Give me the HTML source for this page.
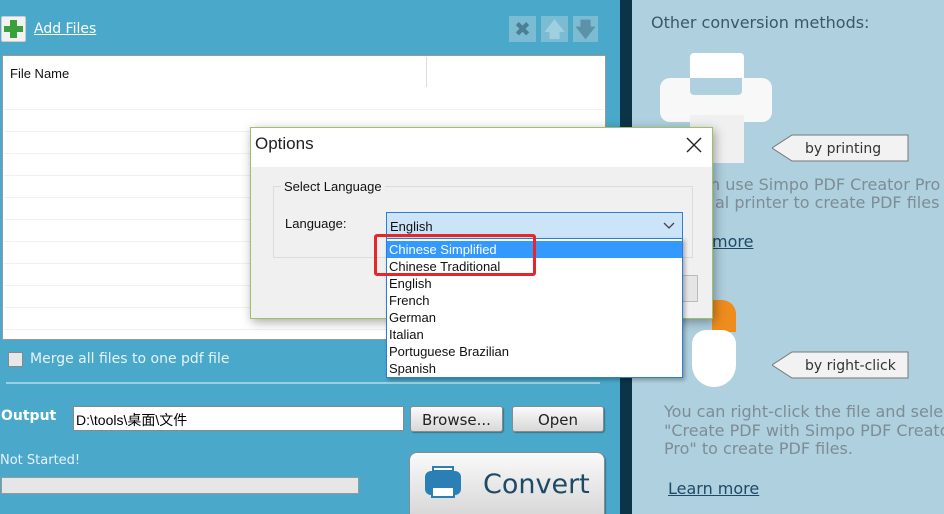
<!DOCTYPE html>
<html style="overflow:hidden"><head><meta charset="utf-8"><style>
*{margin:0;padding:0;box-sizing:border-box}
html,body{width:944px;height:514px;overflow:hidden}
body{position:relative;background:#4aa9cb;font-family:"DejaVu Sans","Liberation Sans","Noto Sans CJK SC",sans-serif}
.a{position:absolute}
.t{font-size:14px;white-space:nowrap}
.btn{background:linear-gradient(#fafafa,#d8d8d8);border:1px solid #8a8a8a;border-radius:3px;text-align:center;color:#222;box-shadow:1px 1px 1px rgba(0,0,0,.3)}
.rt{color:#7d8d96;font-size:16px;line-height:18.5px;white-space:nowrap}
</style></head><body>
<div class="a" style="left:1px;top:16px;width:25px;height:26px;background:#f2f2f2;border-radius:2px;border:1px solid #ccc"></div>
<div class="a" style="left:10px;top:20px;width:7px;height:18px;background:#3aa13a"></div>
<div class="a" style="left:4px;top:26px;width:19px;height:6px;background:#3aa13a"></div>
<div class="a t" style="left:34px;top:21px;color:#fff;text-decoration:underline;font-size:14px">Add Files</div>
<div class="a" style="left:509px;top:16px;width:27px;height:26px;background:#7cbcd3;color:#4b7f95;font-size:20px;text-align:center;line-height:26px;font-weight:bold">✖</div>
<div class="a" style="left:541px;top:16px;width:27px;height:26px;background:#7cbcd3;color:#9fd0e0;font-size:20px;text-align:center;line-height:26px;font-weight:bold">🡅</div>
<div class="a" style="left:573px;top:16px;width:25px;height:26px;background:#7cbcd3;color:#5b92a8;font-size:20px;text-align:center;line-height:26px;font-weight:bold">🡇</div>
<div class="a" style="left:2px;top:55px;width:604px;height:285px;background:#fff;border:1px solid #999"></div>
<div class="a" style="left:426px;top:57px;width:1px;height:30px;background:#ddd"></div>
<div class="a" style="left:10px;top:66px;font-size:13px;font-family:'Liberation Sans',sans-serif;color:#111">File Name</div>
<div class="a" style="left:4px;top:109px;width:600px;height:230px;background:repeating-linear-gradient(#f0f0f0 0 1px,transparent 1px 22px)"></div>
<div class="a" style="left:8px;top:352px;width:15px;height:15px;background:#e8e8e8;border:1px solid #888"></div>
<div class="a t" style="left:30px;top:351px;color:#e6f3f8">Merge all files to one pdf file</div>
<div class="a" style="left:6px;top:382px;width:594px;height:2px;background:#9ccfe0"></div>
<div class="a t" style="left:1px;top:408px;color:#fff;font-weight:bold">Output</div>
<div class="a" style="left:73px;top:406px;width:331px;height:25px;background:#fff;border:1px solid #888;font-size:14px;padding:3px 2px;font-family:'Liberation Sans','Noto Sans CJK SC',sans-serif">D:\tools\桌面\文件</div>
<div class="a btn t" style="left:410px;top:406px;width:93px;height:26px;line-height:26px;font-size:15px">Browse...</div>
<div class="a btn t" style="left:512px;top:406px;width:92px;height:26px;line-height:26px;font-size:15px">Open</div>
<div class="a" style="left:0;top:453px;font-size:13px;color:#e6f3f8">Not Started!</div>
<div class="a" style="left:1px;top:477px;width:358px;height:17px;background:#e6e6e6;border:1px solid #999"></div>
<div class="a btn" style="left:409px;top:452px;width:196px;height:62px;border-radius:8px 8px 0 0;border-bottom:none"></div>
<div class="a" style="left:425px;top:471px;width:36px;height:24px;background:#2a7fb5;border-radius:6px"></div>
<div class="a" style="left:432px;top:466px;width:22px;height:6px;background:#fff;border:2px solid #2a7fb5"></div>
<div class="a" style="left:431px;top:486px;width:24px;height:12px;background:#fff;border:2px solid #2a7fb5"></div>
<div class="a" style="left:483px;top:469px;font-size:27px;color:#1e4a66">Convert</div>
<div class="a" style="left:620px;top:0;width:12px;height:514px;background:#0b3448"></div>
<div class="a" style="left:632px;top:0;width:312px;height:514px;background:#afd0df"></div>
<div class="a" style="left:651px;top:13px;font-size:16px;color:#3a5868">Other conversion methods:</div>
<div class="a" style="left:690px;top:53px;width:54px;height:42px;background:#fff;border-radius:4px"></div>
<div class="a" style="left:660px;top:78px;width:112px;height:44px;background:#f8f8f8;border-radius:10px"></div>
<div class="a" style="left:690px;top:78px;width:52px;height:17px;background:#afd0df;border-radius:0 0 4px 4px"></div>
<div class="a" style="left:690px;top:115px;width:54px;height:48px;background:#f0f0f0"></div>
<svg class="a" style="left:772px;top:134px" width="138" height="30"><polygon points="0,14 20,1 136,1 136,27 20,27" fill="#f2f2f2" stroke="#777"/><text x="33" y="19" font-size="14" fill="#333" font-family="DejaVu Sans">by printing</text></svg>
<div class="a rt" style="left:710px;top:176px">n use Simpo PDF Creator Pro</div>
<div class="a rt" style="left:715px;top:194px">al printer to create PDF files</div>
<div class="a rt" style="left:712px;top:233px;color:#1e4a66;text-decoration:underline">more</div>
<div class="a" style="left:712px;top:300px;width:24px;height:32px;background:#ef8c1e;border-radius:0 14px 0 0"></div>
<div class="a" style="left:692px;top:330px;width:44px;height:57px;background:#fff;border-radius:14px 14px 22px 22px"></div>
<svg class="a" style="left:772px;top:351px" width="138" height="30"><polygon points="0,14 20,1 136,1 136,27 20,27" fill="#f2f2f2" stroke="#777"/><text x="33" y="19" font-size="14" fill="#333" font-family="DejaVu Sans">by right-click</text></svg>
<div class="a rt" style="left:664px;top:403px">You can right-click the file and select<br>"Create PDF with Simpo PDF Creator<br>Pro" to create PDF files.</div>
<div class="a rt" style="left:668px;top:480px;color:#1e4a66;text-decoration:underline">Learn more</div>
<div class="a" style="left:250px;top:127px;width:463px;height:192px;background:#f0f0f0;border:1px solid #9dc06a;box-shadow:2px 3px 10px rgba(0,0,0,.35)"></div>
<div class="a" style="left:251px;top:128px;width:461px;height:39px;background:#fff"></div>
<div class="a" style="left:255px;top:134px;font-size:17px;color:#222;font-family:'Liberation Sans',sans-serif">Options</div>
<svg class="a" style="left:686px;top:137px" width="16" height="16"><path d="M1 1L15 15M15 1L1 15" stroke="#222" stroke-width="1.4"/></svg>
<div class="a" style="left:273px;top:186px;width:420px;height:72px;border:1px solid #dcdcdc"></div>
<div class="a" style="left:281px;top:179px;background:#f0f0f0;padding:0 3px;font-size:13px;font-family:'Liberation Sans',sans-serif;color:#111">Select Language</div>
<div class="a" style="left:285px;top:216px;font-size:13px;font-family:'Liberation Sans',sans-serif;color:#111">Language:</div>
<div class="a" style="left:646px;top:275px;width:52px;height:27px;border:1px solid #bbb;background:#e5e5e5"></div>
<div class="a" style="left:386px;top:212px;width:297px;height:27px;background:#cce4f7;border:1px solid #2b7fd4"></div>
<div class="a" style="left:390px;top:219px;font-size:13px;font-family:'Liberation Sans',sans-serif;color:#111">English</div>
<svg class="a" style="left:663px;top:222px" width="12" height="8"><path d="M1 1 L6 6 L11 1" stroke="#444" fill="none" stroke-width="1.3"/></svg>
<div class="a" style="left:386px;top:238px;width:297px;height:140px;background:#fff;border:1px solid #2b7fd4;box-shadow:2px 2px 4px rgba(0,0,0,.3);font-family:'Liberation Sans',sans-serif;font-size:13px;color:#111;line-height:17px">
<div style="background:#3399ff;color:#fff;padding-left:2px;margin-top:2px">Chinese Simplified</div>
<div style="padding-left:2px">Chinese Traditional<br>English<br>French<br>German<br>Italian<br>Portuguese Brazilian<br>Spanish</div></div>
<div class="a" style="left:374px;top:234px;width:162px;height:42px;border:3px solid #e8262a;border-radius:3px"></div>
</body></html>
